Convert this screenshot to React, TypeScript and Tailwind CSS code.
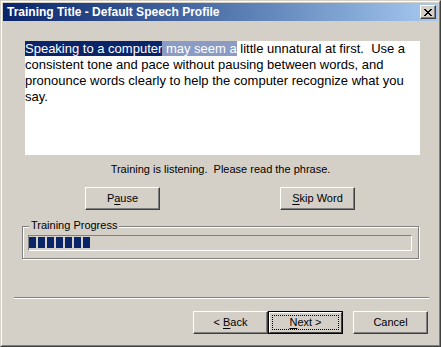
import React from "react";

const font = "font-['Liberation_Sans',Arial,sans-serif]";

function Key({ children }: { children: React.ReactNode }) {
  return <span className="underline underline-offset-[2px]">{children}</span>;
}

function WinButton({
  children,
  isDefault,
}: {
  children: React.ReactNode;
  isDefault?: boolean;
}) {
  if (isDefault) {
    return (
      <div className="w-[75px] h-[23px] border border-black">
        <div className="w-full h-full border border-t-white border-l-white border-r-[#404040] border-b-[#404040] bg-[#d4d0c8] flex items-center justify-center p-[2px]">
          <div className="w-full h-full border border-dotted border-black flex items-center justify-center text-[11px] leading-[13px] text-black whitespace-pre">
            {children}
          </div>
        </div>
      </div>
    );
  }
  return (
    <div className="w-[75px] h-[23px] border border-t-white border-l-white border-r-[#404040] border-b-[#404040] shadow-[inset_-1px_-1px_0_#808080] bg-[#d4d0c8] flex items-center justify-center text-[11px] leading-[13px] text-black whitespace-pre">
      {children}
    </div>
  );
}

export default function App() {
  return (
    <div className={`w-[441px] h-[347px] ${font} select-none`}>
      <div className="w-full h-full border border-t-[#d4d0c8] border-l-[#d4d0c8] border-r-[#404040] border-b-[#404040]">
        <div className="w-full h-full border border-t-white border-l-white border-r-[#808080] border-b-[#808080] bg-[#d4d0c8] p-[1px] flex flex-col">
          {/* title bar */}
          <div className="h-[18px] flex items-center justify-between pl-[4px] pr-[2px] bg-gradient-to-r from-[#0a246a] to-[#a6caf0]">
            <span className="text-white font-bold text-[12px] leading-[14px]">
              Training Title - Default Speech Profile
            </span>
            <div className="w-[16px] h-[14px] border border-t-white border-l-white border-r-[#404040] border-b-[#404040] shadow-[inset_-1px_-1px_0_#808080] bg-[#d4d0c8] flex items-center justify-center">
              <svg width="8" height="7" viewBox="0 0 8 7" shapeRendering="crispEdges">
                <path
                  d="M0 0h2v1H0zM6 0h2v1H6zM1 1h2v1H1zM5 1h2v1H5zM2 2h4v1H2zM3 3h2v1H3zM2 4h4v1H2zM1 5h2v1H1zM5 5h2v1H5zM0 6h2v1H0zM6 6h2v1H6z"
                  fill="#000"
                />
              </svg>
            </div>
          </div>

          {/* phrase box */}
          <div className="ml-[22px] mt-[20px] w-[395px] h-[114px] bg-white text-[13px] leading-[16px] text-black">
            <span className="bg-[#0a246a] text-white">Speaking to a computer</span>
            <span className="bg-[#8b9bc3] text-white"> may seem a</span> little
            unnatural at first.&nbsp; Use a consistent tone and pace without
            pausing between words, and pronounce words clearly to help the
            computer recognize what you say.
          </div>

          <div className="mt-[8px] h-[13px] text-[11px] leading-[13px] text-center text-black">
            Training is listening.&nbsp; Please read the phrase.
          </div>

          <div className="mt-[11px] ml-[82px] flex gap-[120px]">
            <WinButton>
              P<Key>a</Key>use
            </WinButton>
            <WinButton>
              <Key>S</Key>kip Word
            </WinButton>
          </div>

          {/* group box */}
          <div className="relative mt-[16px] ml-[19px] w-[397px] h-[33px] border border-[#808080] shadow-[inset_1px_1px_0_#fff,1px_1px_0_#fff]">
            <span className="absolute left-[6px] top-[-8px] px-[2px] bg-[#d4d0c8] text-[11px] leading-[13px] text-black">
              Training Progress
            </span>
            <div className="mt-[8px] ml-[5px] w-[384px] h-[16px] border border-t-[#808080] border-l-[#808080] border-r-white border-b-white flex items-start gap-[2px] pt-[1px]">
              {[0, 1, 2, 3, 4, 5, 6].map((i) => (
                <div key={i} className="w-[7px] h-[11px] bg-[#0a246a]" />
              ))}
            </div>
          </div>

          <div className="mt-[38px] ml-[11px] w-[415px] h-[2px] border-t border-t-[#808080] border-b border-b-white" />

          <div className="mt-[12px] mr-[10px] flex justify-end">
            <WinButton>
              {"< "}
              <Key>B</Key>ack
            </WinButton>
            <WinButton isDefault>
              <Key>N</Key>
              {"ext >"}
            </WinButton>
            <div className="ml-[10px]">
              <WinButton>Cancel</WinButton>
            </div>
          </div>
        </div>
      </div>
    </div>
  );
}
